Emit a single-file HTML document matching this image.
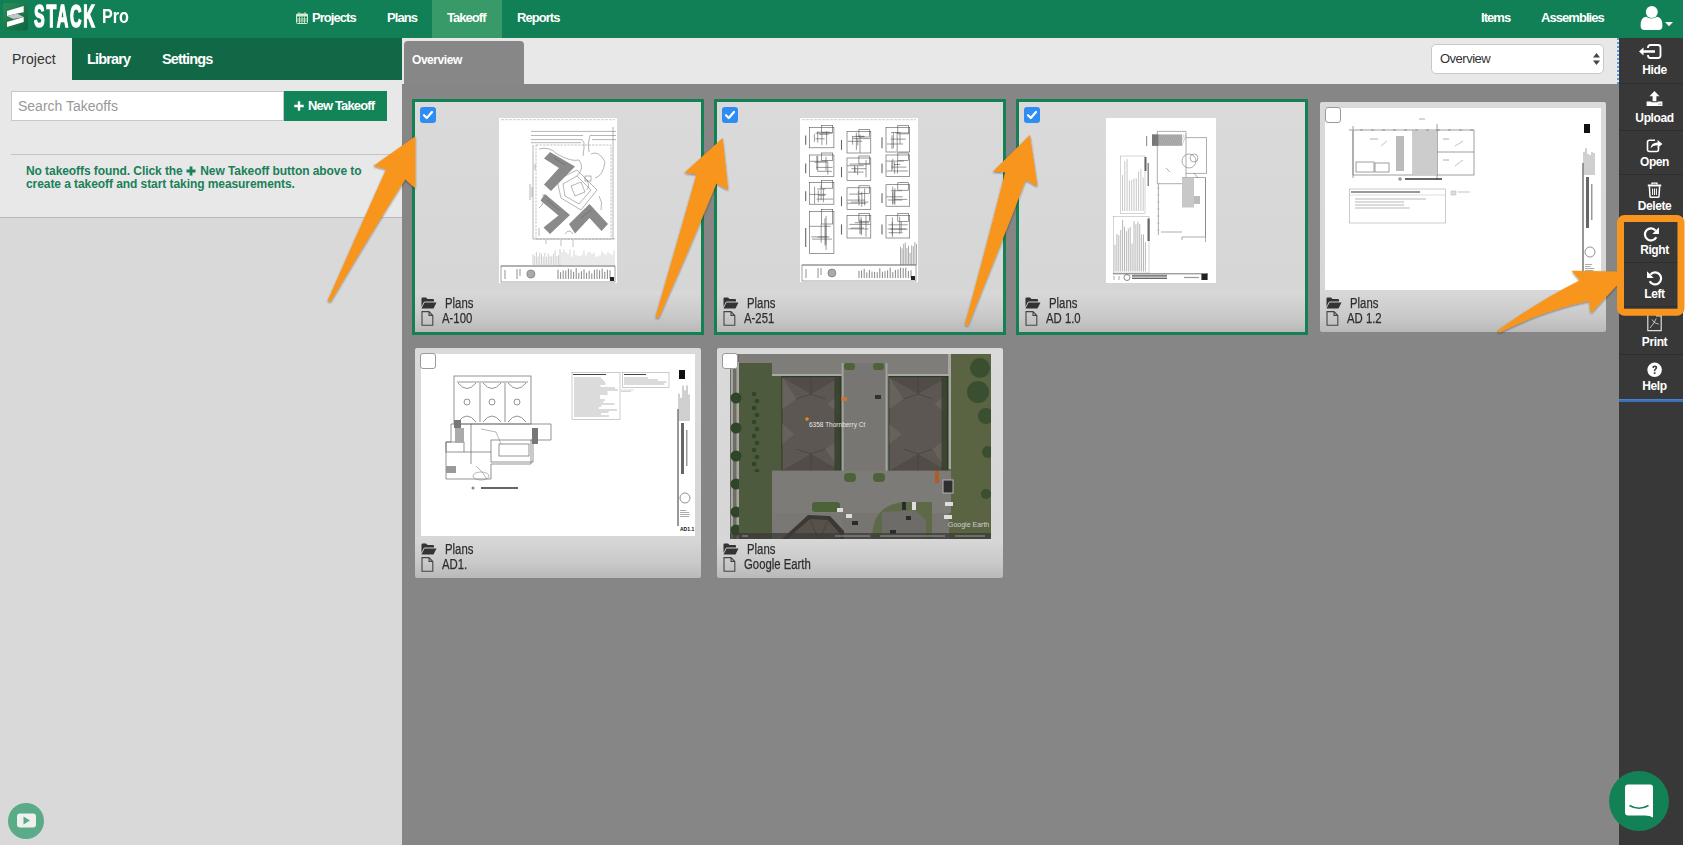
<!DOCTYPE html>
<html><head><meta charset="utf-8">
<style>
*{margin:0;padding:0;box-sizing:border-box}
html,body{width:1685px;height:845px;overflow:hidden;background:#fff;font-family:"Liberation Sans",sans-serif}
.a{position:absolute;white-space:nowrap}
#nav{position:absolute;left:0;top:0;width:1683px;height:38px;background:#128056}
.nt{position:absolute;top:10px;font-size:13px;line-height:15px;font-weight:bold;color:#fff;letter-spacing:-0.95px}
#left{position:absolute;left:0;top:38px;width:402px;height:807px;background:#d9d9d9}
#tabs{position:absolute;left:0;top:0;width:402px;height:42px;background:#116846}
#ptab{position:absolute;left:0;top:0;width:72px;height:42px;background:#e8e8e8}
#lpanel{position:absolute;left:0;top:42px;width:402px;height:138px;background:#e8e8e8;border-bottom:1px solid #b9b9b9}
#main{position:absolute;left:402px;top:84px;width:1217px;height:761px;background:#868686}
#hdr{position:absolute;left:402px;top:38px;width:1217px;height:46px;background:#e8e8e8}
#side{position:absolute;left:1619px;top:38px;width:64px;height:807px;background:#383838}
.sb{position:absolute;left:0;width:64px;border-bottom:1px solid #2e2e2e}
.st{position:absolute;left:3.5px;width:64px;text-align:center;font-size:12px;font-weight:bold;color:#fff;line-height:14px;letter-spacing:-.4px}
.card{position:absolute;width:286px;height:230px;border-radius:2px;background:linear-gradient(#dadada 0,#d6d6d6 188px,#d8d8d8 190px,#c9c9c9 215px,#b9b9b9 230px)}
.sel{outline:3px solid #168055;border-radius:0}
.cl{position:absolute;font-size:14px;line-height:16px;color:#2e2e2e;-webkit-text-stroke:.25px #2e2e2e;transform:scaleX(.81);transform-origin:0 0}
.chk{position:absolute;width:16px;height:16px;border-radius:3px}
</style></head><body>
<div id="nav">
  <!-- logo -->
  <svg class="a" style="left:3px;top:3px" width="26" height="28" viewBox="0 0 26 28">
    <defs><linearGradient id="lg" x1="0" y1="0" x2="1" y2="1"><stop offset="0" stop-color="#2b8d55"/><stop offset="1" stop-color="#0f6440"/></linearGradient></defs>
    <rect x="0" y="0" width="25" height="27.5" rx="2.5" fill="url(#lg)"/>
    <polygon points="4,7.9 20.7,3 20.7,9.3 13.9,10.5 4,13.1" fill="#fff"/>
    <polygon points="4,13.1 13.9,10.5 20.7,13.9 10.3,15.9" fill="#c4c4c4"/>
    <polygon points="4,18.9 20.7,13.9 20.7,18.9 4,24" fill="#fff"/>
  </svg>
  <div class="a" style="left:34px;top:0px;font-size:32px;line-height:32px;font-weight:bold;color:#fff;letter-spacing:3.5px;-webkit-text-stroke:1.6px #fff;transform:scaleX(.5);transform-origin:0 0">STACK</div>
  <div class="a" style="left:102px;top:5px;font-size:21px;line-height:21px;font-weight:bold;color:#fff;transform:scaleX(.77);transform-origin:0 0">Pro</div>
  <svg class="a" style="left:296px;top:12px" width="12" height="12" viewBox="0 0 12 12"><rect x="0.5" y="2" width="11" height="9.5" rx="1" fill="none" stroke="#d9ecd3" stroke-width="1"/><rect x="0.5" y="2" width="11" height="2.5" fill="#d9ecd3"/><path d="M3 0v3M9 0v3M0.5 7h11M0.5 9h11M3.5 4.5v7M6 4.5v7M8.5 4.5v7" stroke="#d9ecd3" stroke-width=".8"/></svg>
  <div class="nt" style="left:312px">Projects</div>
  <div class="nt" style="left:387px">Plans</div>
  <div class="a" style="left:432px;top:0;width:70px;height:38px;background:#389a69"></div>
  <div class="nt" style="left:447px">Takeoff</div>
  <div class="nt" style="left:517px">Reports</div>
  <div class="nt" style="left:1481px">Items</div>
  <div class="nt" style="left:1541px">Assemblies</div>
  <svg class="a" style="left:1640px;top:5px" width="34" height="26" viewBox="0 0 34 26"><circle cx="11.8" cy="7.1" r="6" fill="#fff"/><path d="M0.6 20.5 Q0.6 12.2 6 11.8 Q11.5 15.2 17 11.8 Q22.4 12.2 22.4 20.5 Q22.4 25 18.5 25 H4.5 Q0.6 25 0.6 20.5Z" fill="#fff"/><polygon points="25,17 33,17 29,21.2" fill="#fff"/></svg>
</div>
<div class="a" style="left:1683px;top:0;width:2px;height:845px;background:#fff"></div>

<div id="left">
  <div id="tabs"></div>
  <div id="ptab"></div>
  <div class="a" style="left:12px;top:13px;font-size:14px;line-height:16px;color:#333">Project</div>
  <div class="a" style="left:87px;top:13px;font-size:14.5px;line-height:16px;color:#fff;font-weight:bold;letter-spacing:-.85px">Library</div>
  <div class="a" style="left:162px;top:13px;font-size:14.5px;line-height:16px;color:#fff;font-weight:bold;letter-spacing:-.85px">Settings</div>
  <div id="lpanel"></div>
  <div class="a" style="left:11px;top:53px;width:273px;height:30px;background:#fff;border:1px solid #c8c8c8"></div>
  <div class="a" style="left:18px;top:60px;font-size:14px;line-height:16px;color:#999">Search Takeoffs</div>
  <div class="a" style="left:284px;top:53px;width:103px;height:30px;background:#138358"></div>
  <svg class="a" style="left:294px;top:63px" width="10" height="10" viewBox="0 0 10 10"><path d="M3.8 0.3 H6.2 V3.8 H9.7 V6.2 H6.2 V9.7 H3.8 V6.2 H0.3 V3.8 H3.8 Z" fill="#fff"/></svg>
  <div class="a" style="left:308px;top:60px;font-size:13px;line-height:15px;color:#fff;font-weight:bold;letter-spacing:-.85px">New Takeoff</div>
  <div class="a" style="left:11px;top:116px;width:390px;height:1px;background:#c4c4c4"></div>
  <div class="a" style="left:26px;top:127px;font-size:12px;line-height:13px;color:#198059;font-weight:bold;letter-spacing:-.07px">No takeoffs found. Click the <svg width="10" height="10" viewBox="0 0 10 10" style="display:inline-block;vertical-align:-1px;margin:0 1px 0 0"><path d="M3.6 0.5 H6.4 V3.6 H9.5 V6.4 H6.4 V9.5 H3.6 V6.4 H0.5 V3.6 H3.6 Z" fill="#198059"/></svg> New Takeoff button above to<br>create a takeoff and start taking measurements.</div>
  <svg class="a" style="left:8px;top:765px" width="36" height="36" viewBox="0 0 36 36"><circle cx="18" cy="18" r="18" fill="#5aab88"/><rect x="9" y="10.5" width="19" height="14" rx="3" fill="#f0f0f0"/><polygon points="15.5,13.5 15.5,21.5 22,17.5" fill="#5aab88"/></svg>
</div>

<div id="hdr"></div>
<div class="a" style="left:404px;top:41px;width:120px;height:43px;background:#878787;border-radius:4px 4px 0 0"></div>
<div class="a" style="left:412px;top:53px;font-size:12px;line-height:14px;color:#fff;font-weight:bold;letter-spacing:-.45px">Overview</div>
<div class="a" style="left:1431px;top:44px;width:173px;height:30px;background:#fff;border:1px solid #c9c9c9;border-radius:5px"></div>
<div class="a" style="left:1440px;top:51px;font-size:13px;line-height:15px;color:#333;letter-spacing:-.5px">Overview</div>
<svg class="a" style="left:1593px;top:53px" width="7" height="12" viewBox="0 0 7 12"><polygon points="3.5,0 7,4.5 0,4.5" fill="#444"/><polygon points="0,7.5 7,7.5 3.5,12" fill="#444"/></svg>
<div class="a" style="left:1617px;top:38px;width:2px;height:46px;border-left:2px dotted #5a9ce0"></div>

<div id="main"></div>
<div class="card sel" style="left:415px;top:102px">
<div class="a" style="left:84px;top:16px;line-height:0"><svg width="118" height="165" viewBox="0 0 118 165"><rect width="118" height="165" fill="#fff"/><line x1="2" y1="1.7" x2="116" y2="1.7" stroke="#aaa" stroke-width=".6" stroke-dasharray="3 1"/><g stroke="#777" stroke-width=".55" fill="none"><line x1="32" y1="13.4" x2="117" y2="13.4"/><line x1="32" y1="17.5" x2="84" y2="17.5"/><line x1="91" y1="17.5" x2="117" y2="17.5"/><line x1="32" y1="21.6" x2="83" y2="21.6"/><line x1="93" y1="21.6" x2="117" y2="21.6"/><line x1="32" y1="24.7" x2="82" y2="24.7"/><path d="M83 21.6 Q86 24 85 30 L84 38"/><path d="M91 17.5 Q88 26 90 34"/><line x1="114" y1="9" x2="114" y2="121"/><path d="M37 27 H112 V121 H37 Z" stroke="#999" stroke-dasharray="2.5 1"/><path d="M34 27 V121 H116"/><path d="M40 31 Q50 28 58 36 Q72 44 80 42 Q86 50 78 58"/><path d="M92 36 Q100 32 106 44 Q104 58 96 60"/><path d="M86 60 Q92 66 88 72"/><path d="M58 62 L78 52 L98 72 L82 92 L62 80 Z"/><path d="M64 66 L78 58 L92 72 L80 86 L66 78 Z"/><path d="M72 68 L82 64 L86 74 L76 78 Z"/><rect x="86" y="58" width="6" height="5"/><path d="M40 90 Q46 86 44 76"/><path d="M100 78 Q104 84 102 92"/><path d="M66 116 Q70 110 74 116"/></g><g fill="#8a8a8a"><path d="M51 34 L76 48.5 L52 73 L45 66.5 L60 50 L45 40.5 Z"/><path d="M46 76 L71 97 L51 116 L44.5 109.5 L59.5 97.5 L41.5 82.5 Z"/><path d="M70 106 L90.5 86 L109 106 L102.5 113 L90.5 100 L76 115.5 Z"/></g><g stroke="#555" stroke-width=".4"><line x1="55" y1="40" x2="66" y2="47"/><line x1="48" y1="82" x2="60" y2="92"/><line x1="82" y1="100" x2="92" y2="92"/></g><g stroke="#888" stroke-width=".6"><line x1="31" y1="66" x2="31" y2="82"/><line x1="33" y1="69" x2="33" y2="79"/><line x1="40" y1="110" x2="40" y2="118"/><line x1="36" y1="46" x2="36" y2="52"/></g><g stroke="#999" stroke-width=".6"><line x1="62" y1="122" x2="62" y2="128"/><line x1="74" y1="122" x2="74" y2="129"/><line x1="47" y1="122" x2="47" y2="126"/></g><line x1="61" y1="131" x2="61" y2="148" stroke="#999" stroke-width=".5"/><g stroke="#b0b0b0" stroke-width="0.6"><line x1="34.0" y1="136.4" x2="34.0" y2="147.0"/><line x1="35.7" y1="137.8" x2="35.7" y2="147.0"/><line x1="37.4" y1="133.8" x2="37.4" y2="147.0"/><line x1="39.1" y1="138.4" x2="39.1" y2="147.0"/><line x1="40.8" y1="134.7" x2="40.8" y2="147.0"/><line x1="42.5" y1="136.1" x2="42.5" y2="147.0"/><line x1="44.2" y1="138.5" x2="44.2" y2="147.0"/><line x1="45.9" y1="134.9" x2="45.9" y2="147.0"/><line x1="47.6" y1="138.7" x2="47.6" y2="147.0"/><line x1="49.3" y1="135.5" x2="49.3" y2="147.0"/><line x1="51.0" y1="138.4" x2="51.0" y2="147.0"/><line x1="52.7" y1="138.3" x2="52.7" y2="147.0"/><line x1="54.4" y1="135.6" x2="54.4" y2="147.0"/><line x1="56.1" y1="132.4" x2="56.1" y2="147.0"/><line x1="57.8" y1="138.0" x2="57.8" y2="147.0"/><line x1="59.5" y1="137.2" x2="59.5" y2="147.0"/></g><g stroke="#bbb" stroke-width="0.6"><line x1="63.0" y1="134.0" x2="63.0" y2="147.0"/><line x1="65.0" y1="131.4" x2="65.0" y2="147.0"/><line x1="67.0" y1="134.4" x2="67.0" y2="147.0"/><line x1="69.0" y1="135.8" x2="69.0" y2="147.0"/><line x1="71.0" y1="131.2" x2="71.0" y2="147.0"/><line x1="73.0" y1="138.6" x2="73.0" y2="147.0"/><line x1="75.0" y1="132.1" x2="75.0" y2="147.0"/><line x1="77.0" y1="136.7" x2="77.0" y2="147.0"/><line x1="79.0" y1="137.8" x2="79.0" y2="147.0"/><line x1="81.0" y1="138.1" x2="81.0" y2="147.0"/><line x1="83.0" y1="136.5" x2="83.0" y2="147.0"/><line x1="85.0" y1="132.5" x2="85.0" y2="147.0"/><line x1="87.0" y1="137.6" x2="87.0" y2="147.0"/><line x1="89.0" y1="134.3" x2="89.0" y2="147.0"/><line x1="91.0" y1="133.9" x2="91.0" y2="147.0"/><line x1="93.0" y1="136.0" x2="93.0" y2="147.0"/><line x1="95.0" y1="134.6" x2="95.0" y2="147.0"/><line x1="97.0" y1="138.5" x2="97.0" y2="147.0"/><line x1="99.0" y1="138.5" x2="99.0" y2="147.0"/><line x1="101.0" y1="137.4" x2="101.0" y2="147.0"/><line x1="103.0" y1="133.6" x2="103.0" y2="147.0"/><line x1="105.0" y1="135.6" x2="105.0" y2="147.0"/><line x1="107.0" y1="136.5" x2="107.0" y2="147.0"/><line x1="109.0" y1="134.3" x2="109.0" y2="147.0"/><line x1="111.0" y1="135.4" x2="111.0" y2="147.0"/><line x1="113.0" y1="136.6" x2="113.0" y2="147.0"/><line x1="115.0" y1="132.6" x2="115.0" y2="147.0"/></g><g fill="none" stroke="#666" stroke-width="0.6"><line x1="2" y1="148" x2="116" y2="148"/><rect x="2" y="148" width="114" height="16"/></g><g stroke="#777" stroke-width="0.8"><line x1="6" y1="152" x2="6" y2="161"/><line x1="18" y1="151" x2="18" y2="161"/><line x1="21" y1="151" x2="21" y2="158"/></g><circle cx="31.9" cy="156" r="4" fill="#aaa" stroke="#666" stroke-width=".6"/><g stroke="#888" stroke-width="1"><line x1="59.0" y1="151.7" x2="59.0" y2="161.0"/><line x1="61.6" y1="154.2" x2="61.6" y2="161.0"/><line x1="64.2" y1="152.3" x2="64.2" y2="161.0"/><line x1="66.8" y1="152.6" x2="66.8" y2="161.0"/><line x1="69.4" y1="150.7" x2="69.4" y2="161.0"/><line x1="72.0" y1="151.5" x2="72.0" y2="161.0"/><line x1="74.6" y1="153.9" x2="74.6" y2="161.0"/><line x1="77.2" y1="150.1" x2="77.2" y2="161.0"/><line x1="79.8" y1="154.9" x2="79.8" y2="161.0"/><line x1="82.4" y1="153.2" x2="82.4" y2="161.0"/><line x1="85.0" y1="151.3" x2="85.0" y2="161.0"/><line x1="87.6" y1="154.7" x2="87.6" y2="161.0"/><line x1="90.2" y1="152.8" x2="90.2" y2="161.0"/><line x1="92.8" y1="155.3" x2="92.8" y2="161.0"/><line x1="95.4" y1="151.8" x2="95.4" y2="161.0"/><line x1="98.0" y1="151.3" x2="98.0" y2="161.0"/><line x1="100.6" y1="152.3" x2="100.6" y2="161.0"/><line x1="103.2" y1="150.7" x2="103.2" y2="161.0"/><line x1="105.8" y1="153.8" x2="105.8" y2="161.0"/><line x1="108.4" y1="151.7" x2="108.4" y2="161.0"/><line x1="111.0" y1="152.2" x2="111.0" y2="161.0"/></g><rect x="111" y="159" width="4" height="4" fill="#222"/></svg></div>
<div class="chk" style="left:5px;top:5px;background:#2f8cf3"><svg width="16" height="16" viewBox="0 0 16 16" style="position:absolute;left:0;top:0"><path d="M4 8.2 L6.8 11 L12 5" fill="none" stroke="#fff" stroke-width="2.2" stroke-linecap="round" stroke-linejoin="round"/></svg></div>
<svg class="a" style="left:6px;top:195px" width="16" height="12" viewBox="0 0 16 12"><path d="M0.5 1.5 Q0.5 0.5 1.5 0.5 H5 L6.5 2 H12 Q13 2 13 3 V4.5 H4 Q3 4.5 2.5 5.5 L0.5 10 Z" fill="#333"/><path d="M3.5 5.5 H15.5 L12.5 11.5 H0.5 Z" fill="#333"/></svg><svg class="a" style="left:6px;top:209px" width="13" height="15" viewBox="0 0 13 15"><path d="M1 0.6 H8 L11.8 4.4 V14.2 H1 Z M8 0.6 V4.4 H11.8" fill="none" stroke="#444" stroke-width="1.1"/></svg>
<div class="cl" style="left:30px;top:193px">Plans</div>
<div class="cl" style="left:27px;top:208px">A-100</div>
</div>
<div class="card sel" style="left:717px;top:102px">
<div class="a" style="left:83px;top:16px;line-height:0"><svg width="118" height="164" viewBox="0 0 118 164"><rect width="118" height="164" fill="#fff"/><line x1="2" y1="1.7" x2="116" y2="1.7" stroke="#aaa" stroke-width=".6" stroke-dasharray="3 1"/><g fill="none" stroke="#555" stroke-width="0.6"><rect x="9.3" y="9.3" width="24.6" height="20.5"/><line x1="17.7" y1="13.8" x2="17.7" y2="24.6"/><line x1="15.5" y1="20.8" x2="24.7" y2="20.8"/><line x1="14.4" y1="16.2" x2="14.4" y2="23.7"/><line x1="19.1" y1="16.3" x2="28.7" y2="16.3"/><line x1="26.6" y1="13.2" x2="26.6" y2="26.8"/><line x1="15.5" y1="15.3" x2="32.6" y2="15.3"/><line x1="21.9" y1="15.4" x2="21.9" y2="27.1"/><line x1="16.8" y1="14.2" x2="29.9" y2="14.2"/><rect x="21.6" y="7.300000000000001" width="11.1" height="7.2"/></g><line x1="5.7" y1="17.5" x2="5.7" y2="26.7" stroke="#666" stroke-width="1.1"/><g fill="none" stroke="#555" stroke-width="0.6"><rect x="9.3" y="37" width="24.6" height="21.5"/><line x1="17.7" y1="37.9" x2="17.7" y2="53.3"/><line x1="10.0" y1="43.3" x2="28.0" y2="43.3"/><line x1="27.8" y1="43.9" x2="27.8" y2="56.5"/><line x1="14.6" y1="44.2" x2="26.8" y2="44.2"/><line x1="16.8" y1="37.9" x2="16.8" y2="51.7"/><line x1="17.5" y1="53.3" x2="32.0" y2="53.3"/><line x1="26.0" y1="38.7" x2="26.0" y2="52.6"/><line x1="16.5" y1="49.4" x2="32.5" y2="49.4"/><rect x="21.6" y="35" width="11.1" height="7.5"/></g><line x1="5.7" y1="45.6" x2="5.7" y2="55.3" stroke="#666" stroke-width="1.1"/><g fill="none" stroke="#555" stroke-width="0.6"><rect x="9.3" y="64.6" width="24.6" height="21.6"/><line x1="23.4" y1="71.0" x2="23.4" y2="84.4"/><line x1="16.6" y1="81.1" x2="33.1" y2="81.1"/><line x1="14.6" y1="68.6" x2="14.6" y2="85.7"/><line x1="18.2" y1="77.3" x2="25.2" y2="77.3"/><line x1="21.1" y1="66.7" x2="21.1" y2="82.3"/><line x1="9.4" y1="76.4" x2="26.2" y2="76.4"/><line x1="18.3" y1="72.5" x2="18.3" y2="84.2"/><line x1="17.1" y1="71.0" x2="25.4" y2="71.0"/><rect x="21.6" y="62.599999999999994" width="11.1" height="7.6"/></g><line x1="5.7" y1="73.2" x2="5.7" y2="83.0" stroke="#666" stroke-width="1.1"/><g fill="none" stroke="#555" stroke-width="0.6"><rect x="9.3" y="93.3" width="24.6" height="42"/><line x1="25.9" y1="107.1" x2="25.9" y2="126.6"/><line x1="9.3" y1="108.3" x2="30.6" y2="108.3"/><line x1="21.2" y1="106.1" x2="21.2" y2="124.8"/><line x1="12.0" y1="121.1" x2="32.0" y2="121.1"/><line x1="25.0" y1="100.3" x2="25.0" y2="127.5"/><line x1="11.2" y1="118.9" x2="29.5" y2="118.9"/><line x1="26.1" y1="97.8" x2="26.1" y2="132.0"/><line x1="17.6" y1="119.0" x2="27.4" y2="119.0"/><rect x="21.6" y="91.3" width="11.1" height="14.7"/></g><line x1="5.7" y1="110.1" x2="5.7" y2="129.0" stroke="#666" stroke-width="1.1"/><g fill="none" stroke="#555" stroke-width="0.6"><rect x="47" y="13.4" width="23.8" height="21.6"/><line x1="56.4" y1="14.7" x2="56.4" y2="32.0"/><line x1="52.1" y1="18.7" x2="64.8" y2="18.7"/><line x1="52.6" y1="17.8" x2="52.6" y2="26.7"/><line x1="47.7" y1="23.3" x2="62.1" y2="23.3"/><line x1="57.8" y1="20.5" x2="57.8" y2="27.4"/><line x1="53.0" y1="20.6" x2="70.3" y2="20.6"/><line x1="60.0" y1="16.8" x2="60.0" y2="34.8"/><line x1="55.2" y1="18.3" x2="64.0" y2="18.3"/><rect x="58.9" y="11.4" width="10.7" height="7.6"/></g><line x1="41.5" y1="22.0" x2="41.5" y2="31.8" stroke="#666" stroke-width="1.1"/><g fill="none" stroke="#555" stroke-width="0.6"><rect x="47" y="40" width="23.8" height="22.6"/><line x1="55.0" y1="48.7" x2="55.0" y2="54.7"/><line x1="47.8" y1="54.1" x2="63.6" y2="54.1"/><line x1="66.0" y1="41.9" x2="66.0" y2="59.4"/><line x1="51.3" y1="50.7" x2="66.0" y2="50.7"/><line x1="54.5" y1="47.5" x2="54.5" y2="54.4"/><line x1="47.2" y1="47.7" x2="63.8" y2="47.7"/><line x1="57.6" y1="48.2" x2="57.6" y2="57.0"/><line x1="49.5" y1="46.1" x2="70.7" y2="46.1"/><rect x="58.9" y="38" width="10.7" height="7.9"/></g><line x1="41.5" y1="49.0" x2="41.5" y2="59.2" stroke="#666" stroke-width="1.1"/><g fill="none" stroke="#555" stroke-width="0.6"><rect x="47" y="69.8" width="23.8" height="21.5"/><line x1="58.4" y1="73.0" x2="58.4" y2="83.9"/><line x1="47.1" y1="85.3" x2="66.1" y2="85.3"/><line x1="64.6" y1="70.5" x2="64.6" y2="87.5"/><line x1="47.4" y1="82.1" x2="64.9" y2="82.1"/><line x1="61.8" y1="73.7" x2="61.8" y2="88.9"/><line x1="49.3" y1="76.1" x2="62.3" y2="76.1"/><line x1="59.0" y1="77.7" x2="59.0" y2="87.8"/><line x1="50.7" y1="84.1" x2="68.4" y2="84.1"/><rect x="58.9" y="67.8" width="10.7" height="7.5"/></g><line x1="41.5" y1="78.4" x2="41.5" y2="88.1" stroke="#666" stroke-width="1.1"/><g fill="none" stroke="#555" stroke-width="0.6"><rect x="47" y="97.4" width="23.8" height="22.6"/><line x1="59.9" y1="101.3" x2="59.9" y2="116.2"/><line x1="54.7" y1="104.7" x2="69.1" y2="104.7"/><line x1="61.1" y1="98.8" x2="61.1" y2="115.7"/><line x1="49.4" y1="106.4" x2="70.4" y2="106.4"/><line x1="66.0" y1="97.8" x2="66.0" y2="118.7"/><line x1="50.6" y1="110.1" x2="64.0" y2="110.1"/><line x1="61.4" y1="101.5" x2="61.4" y2="117.2"/><line x1="48.3" y1="110.9" x2="68.6" y2="110.9"/><rect x="58.9" y="95.4" width="10.7" height="7.9"/></g><line x1="41.5" y1="106.4" x2="41.5" y2="116.6" stroke="#666" stroke-width="1.1"/><g fill="none" stroke="#555" stroke-width="0.6"><rect x="86" y="9.3" width="23.7" height="24.7"/><line x1="97.2" y1="14.8" x2="97.2" y2="33.3"/><line x1="90.8" y1="21.1" x2="105.8" y2="21.1"/><line x1="93.4" y1="14.4" x2="93.4" y2="30.3"/><line x1="86.9" y1="26.0" x2="103.1" y2="26.0"/><line x1="92.0" y1="17.3" x2="92.0" y2="31.0"/><line x1="95.3" y1="14.9" x2="109.4" y2="14.9"/><line x1="100.0" y1="15.4" x2="100.0" y2="25.7"/><line x1="91.0" y1="14.5" x2="100.8" y2="14.5"/><rect x="97.8" y="7.300000000000001" width="10.7" height="8.6"/></g><line x1="82" y1="19.2" x2="82" y2="30.3" stroke="#666" stroke-width="1.1"/><g fill="none" stroke="#555" stroke-width="0.6"><rect x="86" y="37" width="23.7" height="21.5"/><line x1="97.5" y1="42.7" x2="97.5" y2="55.6"/><line x1="86.1" y1="43.1" x2="103.8" y2="43.1"/><line x1="94.6" y1="44.0" x2="94.6" y2="55.8"/><line x1="91.3" y1="49.1" x2="106.5" y2="49.1"/><line x1="92.8" y1="40.8" x2="92.8" y2="51.3"/><line x1="86.6" y1="53.0" x2="108.0" y2="53.0"/><line x1="91.8" y1="42.9" x2="91.8" y2="52.8"/><line x1="94.0" y1="46.5" x2="100.4" y2="46.5"/><rect x="97.8" y="35" width="10.7" height="7.5"/></g><line x1="82" y1="45.6" x2="82" y2="55.3" stroke="#666" stroke-width="1.1"/><g fill="none" stroke="#555" stroke-width="0.6"><rect x="86" y="66.7" width="23.7" height="21.5"/><line x1="94.4" y1="72.6" x2="94.4" y2="85.5"/><line x1="87.8" y1="82.0" x2="102.4" y2="82.0"/><line x1="92.8" y1="68.6" x2="92.8" y2="85.9"/><line x1="91.0" y1="72.7" x2="102.2" y2="72.7"/><line x1="94.9" y1="70.4" x2="94.9" y2="86.8"/><line x1="86.1" y1="78.8" x2="102.8" y2="78.8"/><line x1="92.8" y1="74.2" x2="92.8" y2="86.6"/><line x1="93.8" y1="81.4" x2="107.3" y2="81.4"/><rect x="97.8" y="64.7" width="10.7" height="7.5"/></g><line x1="82" y1="75.3" x2="82" y2="85.0" stroke="#666" stroke-width="1.1"/><g fill="none" stroke="#555" stroke-width="0.6"><rect x="86" y="97.4" width="23.7" height="22.6"/><line x1="92.3" y1="103.8" x2="92.3" y2="116.9"/><line x1="88.6" y1="114.7" x2="102.6" y2="114.7"/><line x1="101.2" y1="103.4" x2="101.2" y2="113.7"/><line x1="89.8" y1="111.2" x2="107.6" y2="111.2"/><line x1="92.4" y1="99.4" x2="92.4" y2="119.1"/><line x1="88.5" y1="106.8" x2="107.8" y2="106.8"/><line x1="99.7" y1="98.8" x2="99.7" y2="115.9"/><line x1="87.6" y1="110.9" x2="106.4" y2="110.9"/><rect x="97.8" y="95.4" width="10.7" height="7.9"/></g><line x1="82" y1="106.4" x2="82" y2="116.6" stroke="#666" stroke-width="1.1"/><g stroke="#888" stroke-width="0.7"><line x1="100.5" y1="128.8" x2="100.5" y2="147.0"/><line x1="102.1" y1="130.3" x2="102.1" y2="147.0"/><line x1="103.7" y1="125.8" x2="103.7" y2="147.0"/><line x1="105.3" y1="124.6" x2="105.3" y2="147.0"/><line x1="106.9" y1="130.0" x2="106.9" y2="147.0"/><line x1="108.5" y1="127.9" x2="108.5" y2="147.0"/><line x1="110.1" y1="134.8" x2="110.1" y2="147.0"/><line x1="111.7" y1="127.4" x2="111.7" y2="147.0"/><line x1="113.3" y1="128.1" x2="113.3" y2="147.0"/><line x1="114.9" y1="124.1" x2="114.9" y2="147.0"/><line x1="116.5" y1="126.0" x2="116.5" y2="147.0"/></g><g fill="none" stroke="#666" stroke-width="0.6"><line x1="2" y1="147" x2="116" y2="147"/><rect x="2" y="147" width="114" height="16"/></g><g stroke="#777" stroke-width="0.8"><line x1="6" y1="151" x2="6" y2="160"/><line x1="18" y1="150" x2="18" y2="160"/><line x1="21" y1="150" x2="21" y2="157"/></g><circle cx="31.9" cy="155" r="4" fill="#aaa" stroke="#666" stroke-width=".6"/><g stroke="#888" stroke-width="1"><line x1="59.0" y1="152.9" x2="59.0" y2="160.0"/><line x1="61.6" y1="152.4" x2="61.6" y2="160.0"/><line x1="64.2" y1="150.8" x2="64.2" y2="160.0"/><line x1="66.8" y1="154.4" x2="66.8" y2="160.0"/><line x1="69.4" y1="152.0" x2="69.4" y2="160.0"/><line x1="72.0" y1="153.6" x2="72.0" y2="160.0"/><line x1="74.6" y1="153.9" x2="74.6" y2="160.0"/><line x1="77.2" y1="154.2" x2="77.2" y2="160.0"/><line x1="79.8" y1="150.3" x2="79.8" y2="160.0"/><line x1="82.4" y1="153.8" x2="82.4" y2="160.0"/><line x1="85.0" y1="153.1" x2="85.0" y2="160.0"/><line x1="87.6" y1="152.3" x2="87.6" y2="160.0"/><line x1="90.2" y1="149.7" x2="90.2" y2="160.0"/><line x1="92.8" y1="154.1" x2="92.8" y2="160.0"/><line x1="95.4" y1="152.0" x2="95.4" y2="160.0"/><line x1="98.0" y1="151.5" x2="98.0" y2="160.0"/><line x1="100.6" y1="149.6" x2="100.6" y2="160.0"/><line x1="103.2" y1="150.0" x2="103.2" y2="160.0"/><line x1="105.8" y1="149.7" x2="105.8" y2="160.0"/><line x1="108.4" y1="153.0" x2="108.4" y2="160.0"/><line x1="111.0" y1="152.2" x2="111.0" y2="160.0"/></g><rect x="111" y="158" width="4" height="4" fill="#222"/></svg></div>
<div class="chk" style="left:5px;top:5px;background:#2f8cf3"><svg width="16" height="16" viewBox="0 0 16 16" style="position:absolute;left:0;top:0"><path d="M4 8.2 L6.8 11 L12 5" fill="none" stroke="#fff" stroke-width="2.2" stroke-linecap="round" stroke-linejoin="round"/></svg></div>
<svg class="a" style="left:6px;top:195px" width="16" height="12" viewBox="0 0 16 12"><path d="M0.5 1.5 Q0.5 0.5 1.5 0.5 H5 L6.5 2 H12 Q13 2 13 3 V4.5 H4 Q3 4.5 2.5 5.5 L0.5 10 Z" fill="#333"/><path d="M3.5 5.5 H15.5 L12.5 11.5 H0.5 Z" fill="#333"/></svg><svg class="a" style="left:6px;top:209px" width="13" height="15" viewBox="0 0 13 15"><path d="M1 0.6 H8 L11.8 4.4 V14.2 H1 Z M8 0.6 V4.4 H11.8" fill="none" stroke="#444" stroke-width="1.1"/></svg>
<div class="cl" style="left:30px;top:193px">Plans</div>
<div class="cl" style="left:27px;top:208px">A-251</div>
</div>
<div class="card sel" style="left:1019px;top:102px">
<div class="a" style="left:87px;top:16px;line-height:0"><svg width="110" height="165" viewBox="0 0 110 165"><rect width="110" height="165" fill="#fff"/><rect x="46" y="16.5" width="30" height="11.3" fill="#b0b0b0"/><rect x="46" y="16.5" width="6.4" height="11.3" fill="#777"/><g stroke="#8a8a8a" stroke-width=".4"><line x1="52" y1="16.5" x2="48" y2="27.8"/><line x1="54" y1="16.5" x2="50" y2="27.8"/><line x1="56" y1="16.5" x2="52" y2="27.8"/><line x1="58" y1="16.5" x2="54" y2="27.8"/><line x1="60" y1="16.5" x2="56" y2="27.8"/><line x1="62" y1="16.5" x2="58" y2="27.8"/><line x1="64" y1="16.5" x2="60" y2="27.8"/><line x1="66" y1="16.5" x2="62" y2="27.8"/><line x1="68" y1="16.5" x2="64" y2="27.8"/><line x1="70" y1="16.5" x2="66" y2="27.8"/><line x1="72" y1="16.5" x2="68" y2="27.8"/><line x1="74" y1="16.5" x2="70" y2="27.8"/><line x1="76" y1="16.5" x2="72" y2="27.8"/><line x1="78" y1="16.5" x2="74" y2="27.8"/><line x1="80" y1="16.5" x2="76" y2="27.8"/></g><g fill="none" stroke="#777" stroke-width=".6"><path d="M51.3 13.4 H80 V65.7 H51.3 Z"/><path d="M80 19.6 H100.5 V55.4 H80"/><path d="M76 59.5 H99.5 V119 H76"/><path d="M52.4 65.7 V117"/><line x1="55" y1="114" x2="76" y2="114"/><line x1="76" y1="119" x2="76" y2="122"/><circle cx="83" cy="43" r="7"/><circle cx="88" cy="40" r="4"/><path d="M60 50 L64 54"/><path d="M88 55 L92 60"/><line x1="99.5" y1="60" x2="99.5" y2="124"/></g><rect x="76" y="59.5" width="12" height="30" fill="#c8c8c8"/><rect x="88" y="78" width="6" height="8" fill="#bbb"/><g stroke="#999" stroke-width=".5"><line x1="51" y1="70" x2="53.5" y2="70"/><line x1="51" y1="77" x2="53.5" y2="77"/><line x1="51" y1="84" x2="53.5" y2="84"/><line x1="51" y1="91" x2="53.5" y2="91"/><line x1="51" y1="98" x2="53.5" y2="98"/><line x1="51" y1="105" x2="53.5" y2="105"/><line x1="51" y1="112" x2="53.5" y2="112"/></g><rect x="14.4" y="38" width="24.6" height="57.4" fill="none" stroke="#aaa" stroke-width=".5"/><g stroke="#b0b0b0" stroke-width="0.7"><line x1="16.5" y1="57.0" x2="16.5" y2="93.0"/><line x1="18.8" y1="43.1" x2="18.8" y2="93.0"/><line x1="21.1" y1="41.1" x2="21.1" y2="93.0"/><line x1="23.4" y1="62.5" x2="23.4" y2="93.0"/><line x1="25.7" y1="61.8" x2="25.7" y2="93.0"/><line x1="28.0" y1="60.4" x2="28.0" y2="93.0"/><line x1="30.3" y1="60.3" x2="30.3" y2="93.0"/><line x1="32.6" y1="53.6" x2="32.6" y2="93.0"/><line x1="34.9" y1="50.9" x2="34.9" y2="93.0"/><line x1="37.2" y1="59.5" x2="37.2" y2="93.0"/></g><rect x="38.5" y="39" width="2" height="14" fill="#666"/><rect x="41.5" y="45" width="1.5" height="23" fill="#888"/><g fill="#999"><rect x="40" y="18" width="1.2" height="10"/></g><rect x="7.3" y="98.5" width="35.7" height="56.5" fill="none" stroke="#aaa" stroke-width=".5"/><g stroke="#a0a0a0" stroke-width="0.75"><line x1="9.0" y1="126.9" x2="9.0" y2="153.5"/><line x1="10.9" y1="115.9" x2="10.9" y2="153.5"/><line x1="12.8" y1="117.2" x2="12.8" y2="153.5"/><line x1="14.7" y1="112.0" x2="14.7" y2="153.5"/><line x1="16.6" y1="101.7" x2="16.6" y2="153.5"/><line x1="18.5" y1="108.7" x2="18.5" y2="153.5"/><line x1="20.4" y1="113.3" x2="20.4" y2="153.5"/><line x1="22.3" y1="110.6" x2="22.3" y2="153.5"/><line x1="24.2" y1="109.1" x2="24.2" y2="153.5"/><line x1="26.1" y1="125.6" x2="26.1" y2="153.5"/><line x1="28.0" y1="103.2" x2="28.0" y2="153.5"/><line x1="29.9" y1="106.3" x2="29.9" y2="153.5"/><line x1="31.8" y1="103.8" x2="31.8" y2="153.5"/><line x1="33.7" y1="105.9" x2="33.7" y2="153.5"/><line x1="35.6" y1="116.6" x2="35.6" y2="153.5"/><line x1="37.5" y1="116.4" x2="37.5" y2="153.5"/><line x1="39.4" y1="124.3" x2="39.4" y2="153.5"/></g><rect x="41.5" y="100.5" width="2.2" height="22.5" fill="#666"/><line x1="7" y1="155.8" x2="102" y2="155.8" stroke="#555" stroke-width=".8"/><circle cx="21" cy="159.5" r="3" fill="none" stroke="#555" stroke-width=".7"/><g stroke="#555" stroke-width="0.9"><line x1="26.0" y1="157.3" x2="61.0" y2="157.3"/><line x1="26.0" y1="158.9" x2="61.0" y2="158.9"/><line x1="26.0" y1="160.5" x2="61.0" y2="160.5"/></g><rect x="95.4" y="155.8" width="6.2" height="6.2" fill="#222"/><line x1="78" y1="159.5" x2="93" y2="159.5" stroke="#999" stroke-width="1.2"/><g stroke="#888" stroke-width=".7"><line x1="8" y1="158" x2="8" y2="162"/><line x1="13" y1="158" x2="13" y2="162"/></g></svg></div>
<div class="chk" style="left:5px;top:5px;background:#2f8cf3"><svg width="16" height="16" viewBox="0 0 16 16" style="position:absolute;left:0;top:0"><path d="M4 8.2 L6.8 11 L12 5" fill="none" stroke="#fff" stroke-width="2.2" stroke-linecap="round" stroke-linejoin="round"/></svg></div>
<svg class="a" style="left:6px;top:195px" width="16" height="12" viewBox="0 0 16 12"><path d="M0.5 1.5 Q0.5 0.5 1.5 0.5 H5 L6.5 2 H12 Q13 2 13 3 V4.5 H4 Q3 4.5 2.5 5.5 L0.5 10 Z" fill="#333"/><path d="M3.5 5.5 H15.5 L12.5 11.5 H0.5 Z" fill="#333"/></svg><svg class="a" style="left:6px;top:209px" width="13" height="15" viewBox="0 0 13 15"><path d="M1 0.6 H8 L11.8 4.4 V14.2 H1 Z M8 0.6 V4.4 H11.8" fill="none" stroke="#444" stroke-width="1.1"/></svg>
<div class="cl" style="left:30px;top:193px">Plans</div>
<div class="cl" style="left:27px;top:208px">AD 1.0</div>
</div>
<div class="card" style="left:1320px;top:102px">
<div class="a" style="left:5px;top:6px;line-height:0"><svg width="276" height="182" viewBox="0 0 276 182"><rect width="276" height="182" fill="#fff"/><g fill="none" stroke="#777" stroke-width=".7"><rect x="28" y="22" width="121" height="45"/><line x1="88" y1="22" x2="88" y2="67"/><line x1="112" y1="22" x2="112" y2="67"/><line x1="112" y1="44" x2="149" y2="44"/><line x1="24" y1="22" x2="152" y2="22" stroke-dasharray="3 8"/><line x1="28" y1="18" x2="28" y2="70"/><line x1="112" y1="16" x2="112" y2="72"/><rect x="31" y="54" width="18" height="10"/><rect x="50" y="55" width="14" height="9"/></g><rect x="88" y="23" width="24" height="44" fill="#ccc"/><rect x="71" y="28" width="8" height="35" fill="#bbb"/><g stroke="#999" stroke-width=".6" fill="none"><path d="M56 38 L62 33"/><path d="M130 38 L138 33"/><path d="M130 58 L138 52"/></g><g stroke="#999" stroke-width=".8"><line x1="45" y1="31" x2="53" y2="31"/><line x1="118" y1="31" x2="124" y2="31"/><line x1="118" y1="52" x2="124" y2="52"/><line x1="94" y1="11" x2="100" y2="11"/></g><circle cx="75" cy="71" r="1.8" fill="#999"/><line x1="80" y1="71" x2="117" y2="71" stroke="#333" stroke-width="1.3"/><rect x="24.5" y="81" width="96" height="34" fill="none" stroke="#aaa" stroke-width=".6"/><line x1="26" y1="84" x2="95" y2="84" stroke="#333" stroke-width="1"/><line x1="24.5" y1="87" x2="120" y2="87" stroke="#bbb" stroke-width=".5"/><g stroke="#999" stroke-width="0.7"><line x1="30.0" y1="91.0" x2="101.0" y2="91.0"/><line x1="30.0" y1="94.0" x2="79.1" y2="94.0"/><line x1="30.0" y1="97.0" x2="79.3" y2="97.0"/><line x1="30.0" y1="100.0" x2="84.7" y2="100.0"/></g><rect x="126" y="83" width="5" height="4" fill="#ddd" stroke="#aaa" stroke-width=".4"/><line x1="133" y1="84" x2="145" y2="84" stroke="#aaa" stroke-width=".7"/><line x1="258" y1="55" x2="258" y2="172" stroke="#333" stroke-width="1"/><rect x="259" y="16" width="6" height="9" fill="#111"/><g stroke="#888" stroke-width="0.8"><line x1="259.0" y1="43.8" x2="259.0" y2="67.0"/><line x1="261.0" y1="40.2" x2="261.0" y2="67.0"/><line x1="263.0" y1="45.9" x2="263.0" y2="67.0"/><line x1="265.0" y1="47.0" x2="265.0" y2="67.0"/><line x1="267.0" y1="44.0" x2="267.0" y2="67.0"/><line x1="269.0" y1="45.0" x2="269.0" y2="67.0"/></g><rect x="261" y="69" width="3" height="51" fill="#666"/><rect x="266" y="76" width="1.5" height="36" fill="#999"/><circle cx="265" cy="144" r="5" fill="none" stroke="#777" stroke-width=".8"/><g stroke="#888" stroke-width="0.7"><line x1="260.0" y1="156.5" x2="267.1" y2="156.5"/><line x1="260.0" y1="158.5" x2="265.6" y2="158.5"/><line x1="260.0" y1="160.5" x2="269.4" y2="160.5"/><line x1="260.0" y1="162.5" x2="268.3" y2="162.5"/></g></svg></div>
<div class="chk" style="left:5px;top:5px;background:#fff;border:1px solid #9a9a9a"></div>
<svg class="a" style="left:6px;top:195px" width="16" height="12" viewBox="0 0 16 12"><path d="M0.5 1.5 Q0.5 0.5 1.5 0.5 H5 L6.5 2 H12 Q13 2 13 3 V4.5 H4 Q3 4.5 2.5 5.5 L0.5 10 Z" fill="#333"/><path d="M3.5 5.5 H15.5 L12.5 11.5 H0.5 Z" fill="#333"/></svg><svg class="a" style="left:6px;top:209px" width="13" height="15" viewBox="0 0 13 15"><path d="M1 0.6 H8 L11.8 4.4 V14.2 H1 Z M8 0.6 V4.4 H11.8" fill="none" stroke="#444" stroke-width="1.1"/></svg>
<div class="cl" style="left:30px;top:193px">Plans</div>
<div class="cl" style="left:27px;top:208px">AD 1.2</div>
</div>
<div class="card" style="left:415px;top:348px">
<div class="a" style="left:6px;top:6px;line-height:0"><svg width="274" height="182" viewBox="0 0 274 182"><rect width="274" height="182" fill="#fff"/><g fill="none" stroke="#666" stroke-width=".7"><rect x="33" y="22" width="77" height="48"/><line x1="59" y1="29" x2="59" y2="68"/><line x1="84" y1="29" x2="84" y2="68"/><line x1="36" y1="28" x2="107" y2="28"/><circle cx="46" cy="48" r="3"/><path d="M37 29 Q46 40 55 29"/><path d="M37 68 Q46 56 55 68"/><circle cx="71" cy="48" r="3"/><path d="M62 29 Q71 40 80 29"/><path d="M62 68 Q71 56 80 68"/><circle cx="96" cy="48" r="3"/><path d="M87 29 Q96 40 105 29"/><path d="M87 68 Q96 56 105 68"/><path d="M30 70 H130 V86 H110 V110 H70 V125 H25 V88 H30 Z"/><rect x="70" y="86" width="42" height="22"/><rect x="25" y="88" width="18" height="10"/><line x1="50" y1="70" x2="50" y2="110"/><line x1="43" y1="98" x2="70" y2="98"/><rect x="78" y="90" width="30" height="12"/></g><rect x="33" y="66" width="7" height="8" fill="#777"/><rect x="34" y="74" width="9" height="15" fill="#aaa"/><rect x="111" y="74" width="6" height="16" fill="#777"/><rect x="25" y="112" width="10" height="7" fill="#999"/><g stroke="#888" stroke-width=".6" fill="none"><path d="M60 75 L75 78 L80 90"/><path d="M55 112 Q62 118 66 125"/><ellipse cx="60" cy="122" rx="8" ry="4"/></g><line x1="60" y1="134" x2="97" y2="134" stroke="#333" stroke-width="1.4"/><circle cx="52" cy="134" r="1.5" fill="#888"/><rect x="151" y="18.5" width="48" height="47" fill="none" stroke="#aaa" stroke-width=".6"/><line x1="152" y1="20.5" x2="185" y2="20.5" stroke="#444" stroke-width="1"/><g stroke="#999" stroke-width="0.7"><line x1="153.0" y1="24.0" x2="180.1" y2="24.0"/><line x1="153.0" y1="26.0" x2="182.2" y2="26.0"/><line x1="153.0" y1="28.0" x2="184.1" y2="28.0"/><line x1="153.0" y1="30.0" x2="184.4" y2="30.0"/><line x1="153.0" y1="32.0" x2="179.6" y2="32.0"/><line x1="153.0" y1="34.0" x2="194.0" y2="34.0"/><line x1="153.0" y1="36.0" x2="196.9" y2="36.0"/><line x1="153.0" y1="38.0" x2="186.4" y2="38.0"/><line x1="153.0" y1="40.0" x2="186.8" y2="40.0"/><line x1="153.0" y1="42.0" x2="178.9" y2="42.0"/><line x1="153.0" y1="44.0" x2="179.2" y2="44.0"/><line x1="153.0" y1="46.0" x2="184.0" y2="46.0"/><line x1="153.0" y1="48.0" x2="182.4" y2="48.0"/><line x1="153.0" y1="50.0" x2="193.6" y2="50.0"/><line x1="153.0" y1="52.0" x2="180.4" y2="52.0"/><line x1="153.0" y1="54.0" x2="177.7" y2="54.0"/><line x1="153.0" y1="56.0" x2="196.0" y2="56.0"/><line x1="153.0" y1="58.0" x2="187.7" y2="58.0"/><line x1="153.0" y1="60.0" x2="180.1" y2="60.0"/><line x1="153.0" y1="62.0" x2="188.0" y2="62.0"/></g><rect x="201.5" y="18.5" width="46.5" height="15" fill="none" stroke="#aaa" stroke-width=".6"/><line x1="203" y1="20.5" x2="225" y2="20.5" stroke="#444" stroke-width="1"/><g stroke="#999" stroke-width="0.7"><line x1="203.0" y1="24.0" x2="227.2" y2="24.0"/><line x1="203.0" y1="26.0" x2="236.9" y2="26.0"/><line x1="203.0" y1="28.0" x2="245.6" y2="28.0"/><line x1="203.0" y1="30.0" x2="243.4" y2="30.0"/></g><g stroke="#bbb" stroke-width="0.6"><line x1="200.0" y1="36.0" x2="212.9" y2="36.0"/><line x1="200.0" y1="37.5" x2="210.0" y2="37.5"/></g><line x1="257" y1="55" x2="257" y2="172" stroke="#333" stroke-width="1"/><rect x="258" y="16" width="6" height="9" fill="#111"/><g stroke="#888" stroke-width="0.8"><line x1="258.0" y1="39.7" x2="258.0" y2="67.0"/><line x1="260.0" y1="43.7" x2="260.0" y2="67.0"/><line x1="262.0" y1="31.6" x2="262.0" y2="67.0"/><line x1="264.0" y1="36.3" x2="264.0" y2="67.0"/><line x1="266.0" y1="31.4" x2="266.0" y2="67.0"/><line x1="268.0" y1="40.4" x2="268.0" y2="67.0"/></g><rect x="260" y="69" width="3" height="51" fill="#666"/><rect x="265" y="76" width="1.5" height="36" fill="#999"/><circle cx="264" cy="144" r="5" fill="none" stroke="#777" stroke-width=".8"/><g stroke="#888" stroke-width="0.7"><line x1="259.0" y1="156.5" x2="265.5" y2="156.5"/><line x1="259.0" y1="158.5" x2="268.2" y2="158.5"/><line x1="259.0" y1="160.5" x2="268.9" y2="160.5"/><line x1="259.0" y1="162.5" x2="268.3" y2="162.5"/></g><text x="259" y="177" font-family="Liberation Sans" font-weight="bold" font-size="5" fill="#111">AD1.1</text></svg></div>
<div class="chk" style="left:5px;top:5px;background:#fff;border:1px solid #9a9a9a"></div>
<svg class="a" style="left:6px;top:195px" width="16" height="12" viewBox="0 0 16 12"><path d="M0.5 1.5 Q0.5 0.5 1.5 0.5 H5 L6.5 2 H12 Q13 2 13 3 V4.5 H4 Q3 4.5 2.5 5.5 L0.5 10 Z" fill="#333"/><path d="M3.5 5.5 H15.5 L12.5 11.5 H0.5 Z" fill="#333"/></svg><svg class="a" style="left:6px;top:209px" width="13" height="15" viewBox="0 0 13 15"><path d="M1 0.6 H8 L11.8 4.4 V14.2 H1 Z M8 0.6 V4.4 H11.8" fill="none" stroke="#444" stroke-width="1.1"/></svg>
<div class="cl" style="left:30px;top:193px">Plans</div>
<div class="cl" style="left:27px;top:208px">AD1.</div>
</div>
<div class="card" style="left:717px;top:348px">
<div class="a" style="left:13px;top:6px;line-height:0"><svg width="261" height="185" viewBox="0 0 261 185"><rect width="261" height="185" fill="#777571"/><rect x="0" y="0" width="9" height="185" fill="#6e6d68"/><rect x="1" y="8" width="2" height="177" fill="#a8a79f"/><rect x="6.5" y="8" width="2.5" height="177" fill="#a8a79f"/><rect x="9" y="9" width="43.4" height="176" fill="#4d5a3e"/><g fill="#2f4528"><circle cx="6" cy="44" r="5.5"/><circle cx="6" cy="74" r="5.5"/><circle cx="6" cy="102" r="5.5"/><circle cx="6" cy="130" r="5.5"/><circle cx="6" cy="158" r="5.5"/><circle cx="6" cy="176" r="5.5"/><circle cx="24" cy="40" r="2.3"/><circle cx="27" cy="47" r="2.3"/><circle cx="24" cy="54" r="2.3"/><circle cx="27" cy="61" r="2.3"/><circle cx="24" cy="68" r="2.3"/><circle cx="27" cy="75" r="2.3"/><circle cx="24" cy="82" r="2.3"/><circle cx="27" cy="89" r="2.3"/><circle cx="24" cy="96" r="2.3"/><circle cx="27" cy="103" r="2.3"/><circle cx="24" cy="110" r="2.3"/><circle cx="27" cy="117" r="2.3"/><circle cx="24" cy="124" r="2.3"/><circle cx="27" cy="131" r="2.3"/><circle cx="24" cy="138" r="2.3"/><circle cx="27" cy="145" r="2.3"/><circle cx="24" cy="152" r="2.3"/><circle cx="27" cy="159" r="2.3"/><circle cx="24" cy="166" r="2.3"/><circle cx="27" cy="173" r="2.3"/></g><rect x="9" y="0" width="210" height="9" fill="#7f7d79"/><rect x="42" y="0" width="177" height="21.5" fill="#7f7d79"/><rect x="42" y="20" width="176" height="2" fill="#a9a7a2"/><rect x="219" y="0" width="42" height="185" fill="#5a6443"/><rect x="218" y="0" width="3" height="115" fill="#a8a6a0"/><g fill="#3a4e30"><circle cx="250" cy="14" r="10"/><circle cx="248" cy="38" r="11"/><circle cx="256" cy="62" r="8"/><circle cx="258" cy="98" r="6"/><circle cx="256" cy="140" r="5"/></g><rect x="111.6" y="9" width="46" height="122" fill="#787672"/><rect x="111.6" y="9" width="2" height="122" fill="#a4a29d"/><rect x="155.5" y="9" width="2" height="122" fill="#a4a29d"/><rect x="51.4" y="22" width="60" height="95" fill="#2e3a28"/><rect x="52.4" y="23.5" width="57" height="93" fill="#5c5752"/><g fill="#514c48"><path d="M52.4 23.5 L80.9 40 L109.4 23.5Z"/><path d="M52.4 116.5 L80.9 100 L109.4 116.5Z"/></g><g fill="#67625c"><path d="M52.4 23.5 L66.4 45 L52.4 55Z"/><path d="M109.4 85 L95.4 95 L109.4 116.5Z"/><path d="M52.4 70 L64.4 80 L52.4 90Z"/><path d="M109.4 40 L97.4 50 L109.4 60Z"/></g><g stroke="#46423e" stroke-width=".8" fill="none"><path d="M66.4 45 L80.9 40 L95.4 45"/><path d="M66.4 95 L80.9 100 L95.4 95"/><path d="M80.9 23.5 V40 M80.9 100 V116.5"/></g><rect x="104.4" y="23.5" width="6" height="93" fill="#33402c" opacity=".8"/><rect x="158.5" y="22" width="60" height="95" fill="#2e3a28"/><rect x="159.5" y="23.5" width="57" height="93" fill="#5c5752"/><g fill="#514c48"><path d="M159.5 23.5 L188.0 40 L216.5 23.5Z"/><path d="M159.5 116.5 L188.0 100 L216.5 116.5Z"/></g><g fill="#67625c"><path d="M159.5 23.5 L173.5 45 L159.5 55Z"/><path d="M216.5 85 L202.5 95 L216.5 116.5Z"/><path d="M159.5 70 L171.5 80 L159.5 90Z"/><path d="M216.5 40 L204.5 50 L216.5 60Z"/></g><g stroke="#46423e" stroke-width=".8" fill="none"><path d="M173.5 45 L188.0 40 L202.5 45"/><path d="M173.5 95 L188.0 100 L202.5 95"/><path d="M188.0 23.5 V40 M188.0 100 V116.5"/></g><rect x="211.5" y="23.5" width="6" height="93" fill="#33402c" opacity=".8"/><rect x="42" y="116.6" width="179" height="42.4" fill="#7d7b77"/><rect x="42" y="159" width="70" height="26" fill="#7a7874"/><rect x="9" y="118" width="33" height="67" fill="#4d5a3e"/><path d="M52 185 L78 161 L100 162 L114 177 L114 185Z" fill="#3c3935"/><path d="M57 185 L80 165 L98 166 L110 180 L110 185Z" fill="#57514b"/><path d="M80 165 L88 185 M98 166 L90 185" stroke="#45403c" stroke-width=".8"/><path d="M142 185 Q142 150 175 148 L202 148 L202 185Z" fill="#5d6a48"/><path d="M152 185 L152 158 L185 156 L196 166 L196 185Z" fill="#6e6c68"/><g fill="#4c6339"><rect x="114" y="119" width="12" height="9" rx="4"/><rect x="143" y="119" width="12" height="9" rx="4"/><rect x="82" y="148" width="28" height="10" rx="3"/><rect x="114" y="9" width="11" height="7" rx="3"/><rect x="143" y="9" width="11" height="7" rx="3"/></g><g fill="#ddd"><rect x="215" y="148" width="8" height="4"/><rect x="214" y="161" width="8" height="4"/><rect x="182" y="148" width="4" height="8"/><rect x="107" y="154" width="6" height="4"/><rect x="116" y="160" width="6" height="4"/></g><g fill="#2b2b2b"><rect x="172" y="148" width="4" height="8"/><rect x="176" y="162" width="5" height="4"/><rect x="122" y="167" width="6" height="4"/><rect x="160" y="176" width="6" height="4"/></g><rect x="213" y="126" width="10" height="13" fill="#2f2f2f" stroke="#b7b5b0" stroke-width="1"/><rect x="205" y="117" width="4" height="12" fill="#b55a22"/><rect x="111" y="43" width="6" height="4" fill="#c8743a"/><rect x="145" y="41" width="6" height="4" fill="#333"/><circle cx="77" cy="65" r="1.8" fill="#e68a1e"/><text x="79" y="73" font-family="Liberation Sans" font-size="6.5" fill="#e6e6e6">6358 Thornberry Ct</text><text x="218" y="173" font-family="Liberation Sans" font-size="7" fill="#cfcfcf">Google Earth</text><rect x="0" y="179" width="261" height="6" fill="#3c3b38" opacity=".75"/><g stroke="#bbb" stroke-width=".7"><line x1="12" y1="182" x2="18" y2="182"/><line x1="105" y1="182" x2="140" y2="182"/><line x1="150" y1="182" x2="215" y2="182"/><line x1="225" y1="182" x2="255" y2="182"/></g></svg></div>
<div class="chk" style="left:5px;top:5px;background:#fff;border:1px solid #9a9a9a"></div>
<svg class="a" style="left:6px;top:195px" width="16" height="12" viewBox="0 0 16 12"><path d="M0.5 1.5 Q0.5 0.5 1.5 0.5 H5 L6.5 2 H12 Q13 2 13 3 V4.5 H4 Q3 4.5 2.5 5.5 L0.5 10 Z" fill="#333"/><path d="M3.5 5.5 H15.5 L12.5 11.5 H0.5 Z" fill="#333"/></svg><svg class="a" style="left:6px;top:209px" width="13" height="15" viewBox="0 0 13 15"><path d="M1 0.6 H8 L11.8 4.4 V14.2 H1 Z M8 0.6 V4.4 H11.8" fill="none" stroke="#444" stroke-width="1.1"/></svg>
<div class="cl" style="left:30px;top:193px">Plans</div>
<div class="cl" style="left:27px;top:208px">Google Earth</div>
</div>


<div id="side">
  <div class="sb" style="top:0;height:46px"></div>
  <div class="sb" style="top:46px;height:47px"></div>
  <div class="sb" style="top:93px;height:44px"></div>
  <div class="sb" style="top:137px;height:44px"></div>
  <div class="sb" style="top:181px;height:44px"></div>
  <div class="sb" style="top:225px;height:44px"></div>
  <div class="sb" style="top:269px;height:48px"></div>
  <div class="sb" style="top:317px;height:44px;border-bottom:none"></div><div class="a" style="left:0;top:361px;width:64px;height:3px;background:#3d6fb8;border-top:1px solid #4a82d0"></div>
    <svg class="a" style="left:19px;top:6px" width="24" height="15" viewBox="0 0 24 15"><path d="M10 4 V3.5 Q10 1 12.5 1 H20 Q22.5 1 22.5 3.5 V11.5 Q22.5 14 20 14 H12.5 Q10 14 10 11.5 V11" fill="none" stroke="#fff" stroke-width="1.8"/><path d="M1 7.5 L5.5 3.5 V6.3 H17 V8.7 H5.5 V11.5 Z" fill="#fff"/></svg>
  <svg class="a" style="left:27px;top:52px" width="17" height="17" viewBox="0 0 17 17"><path d="M8.5 1 L13.5 6.2 H10.4 V11.2 H6.6 V6.2 H3.5 Z" fill="#fff"/><path d="M0.6 11.4 H5.4 V12.2 H11.6 V11.4 H16.4 V16 H0.6 Z" fill="#fff"/><circle cx="13" cy="14" r=".6" fill="#444"/><circle cx="14.8" cy="14" r=".6" fill="#444"/></svg>
  <svg class="a" style="left:27px;top:99px" width="17" height="16" viewBox="0 0 17 16"><path d="M9 3.2 H3.5 Q1.5 3.2 1.5 5.2 V12.5 Q1.5 14.5 3.5 14.5 H10.5 Q12.5 14.5 12.5 12.5 V10" fill="none" stroke="#fff" stroke-width="1.6"/><path d="M4.5 11.5 Q5 5.5 11.6 5.5 V3 L16.4 7 L11.6 11 V8.3 Q7 8.3 4.5 11.5 Z" fill="#fff"/></svg>
  <svg class="a" style="left:28px;top:144px" width="15" height="16" viewBox="0 0 15 16"><path d="M5 2.5 V1.2 H10 V2.5" fill="none" stroke="#fff" stroke-width="1.3"/><rect x="0.8" y="2.5" width="13.4" height="2" fill="#fff"/><path d="M2.4 4.5 L3 14.6 Q3 15.2 3.6 15.2 H11.4 Q12 15.2 12 14.6 L12.6 4.5" fill="none" stroke="#fff" stroke-width="1.5"/><path d="M5.6 6.5 V13 M7.5 6.5 V13 M9.4 6.5 V13" stroke="#fff" stroke-width="1"/></svg>
  <svg class="a" style="left:24px;top:188px" width="17" height="16" viewBox="0 0 17 16"><path d="M12.6 4.6 A6 6 0 1 0 13.3 11.2" fill="none" stroke="#fff" stroke-width="2.2"/><path d="M16 1.2 V8 H9.3 Z" fill="#fff"/></svg>
  <svg class="a" style="left:27px;top:232px" width="17" height="16" viewBox="0 0 17 16"><path d="M4.4 4.6 A6 6 0 1 1 3.7 11.2" fill="none" stroke="#fff" stroke-width="2.2"/><path d="M1 1.2 V8 H7.7 Z" fill="#fff"/></svg>
  <svg class="a" style="left:28px;top:272px" width="15" height="22" viewBox="0 0 15 22"><path d="M0.8 1 H9.5 L14.2 5.8 V20.6 H0.8 Z M9.5 1 V5.8 H14.2" fill="none" stroke="#ddd" stroke-width="1.2"/><path d="M3 18 L7.2 12.5 L9.2 8.5 M7.2 12.5 L11.8 14.2 M7.2 12.5 L5 9.5" fill="none" stroke="#ccc" stroke-width=".9"/></svg>
  <svg class="a" style="left:28px;top:324px" width="16" height="16" viewBox="0 0 16 16"><circle cx="7.6" cy="7.8" r="7.3" fill="#fff"/><path d="M5.2 5.8 Q5.2 3.4 7.7 3.4 Q10.3 3.4 10.3 5.6 Q10.3 7 8.7 7.8 Q8.4 8 8.4 9.2 H6.8 Q6.8 7.4 7.6 6.9 Q8.5 6.3 8.5 5.7 Q8.5 5 7.7 5 Q6.9 5 6.9 6 Z" fill="#3b3b3b"/><rect x="6.8" y="10.3" width="1.7" height="1.7" fill="#3b3b3b"/></svg>
  <div class="st" style="top:25px">Hide</div>
  <div class="st" style="top:73px">Upload</div>
  <div class="st" style="top:117px">Open</div>
  <div class="st" style="top:161px">Delete</div>
  <div class="st" style="top:205px">Right</div>
  <div class="st" style="top:249px">Left</div>
  <div class="st" style="top:297px">Print</div>
  <div class="st" style="top:341px">Help</div>
</div>
<svg class="a" style="left:1609px;top:771px" width="60" height="60" viewBox="0 0 60 60"><circle cx="30" cy="30" r="30" fill="#138156"/><path d="M19 13.6 H41.2 Q44 13.6 44 16.4 V46.6 Q41 44.6 36 44.6 H19 Q16 44.6 16 41.6 V16.6 Q16 13.6 19 13.6 Z" fill="#fff"/><path d="M20.5 34.5 Q30 40 39.5 34.5" fill="none" stroke="#138156" stroke-width="1.6"/></svg>
<svg class="a" style="left:0;top:0;pointer-events:none" width="1685" height="845" viewBox="0 0 1685 845">
<defs><filter id="sh" x="-20%" y="-20%" width="140%" height="140%"><feGaussianBlur in="SourceAlpha" stdDeviation="0.8"/><feOffset dx="-0.5" dy="1" result="b"/><feComponentTransfer><feFuncA type="linear" slope="0.45"/></feComponentTransfer><feMerge><feMergeNode/><feMergeNode in="SourceGraphic"/></feMerge></filter></defs>
<g fill="#f7951f" filter="url(#sh)">
<path d="M327.5 301 Q358 232 386.1 169.3 L373.3 166 L415.4 136.2 L415.4 188.4 L405.3 179.3 Q370 235 330.5 302 Z"/>
<path d="M655.4 317.5 Q677 243 696.6 174.2 L684.2 172.9 L722.7 137.9 L728.2 190 L716.5 183.4 Q690 248 658.6 318 Z"/>
<path d="M964.9 325 Q986 248 1005.2 172.2 L992.7 171.7 L1030 134.9 L1037.5 186.6 L1025.8 180.1 Q998 252 967.9 325.7 Z"/>
<path d="M1497 331 Q1540 300 1579.6 280.4 L1571.6 270.8 L1620 271.5 L1620 282 L1590.8 313.4 L1589.2 301.1 Q1545 310 1499.5 332.5 Z"/>
</g>
<rect x="1620.5" y="218.5" width="60.5" height="93.8" rx="4" fill="none" stroke="#f7951f" stroke-width="7"/>
</svg>

</body></html>
